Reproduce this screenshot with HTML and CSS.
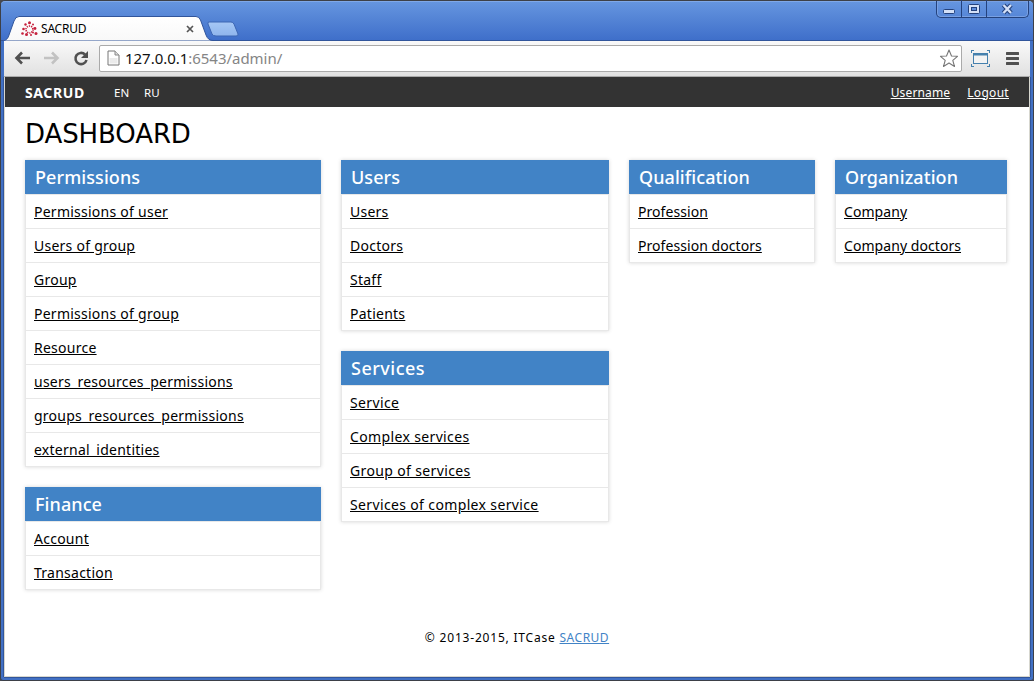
FILE: index.html
```html
<!DOCTYPE html>
<html lang="en">
<head>
<meta charset="utf-8">
<title>SACRUD</title>
<link rel="stylesheet" href="styles.css">
</head>
<body>
<div class="window">
  <header class="titlebar">
    <svg class="tab-shape" width="250" height="41" viewBox="0 0 250 41">
      <defs>
        <linearGradient id="tabFill" x1="0" y1="0" x2="0" y2="1"><stop offset="0" stop-color="#fff"/><stop offset="1" stop-color="#f8f8f8"/></linearGradient>
        <linearGradient id="newFill" x1="0" y1="0" x2="0" y2="1"><stop offset="0" stop-color="#a5c7f5"/><stop offset="1" stop-color="#8fb5ec"/></linearGradient>
      </defs>
      <path d="M3 41C7 40 8 38 9 35L14 21Q15.500 16.500 19 16.500H196Q199 16.500 200.500 20L206 35Q208 40.500 213 40.500V41Z" fill="url(#tabFill)" stroke="#31559b"/>
      <path d="M209 22H231Q233 22 234 24L238 34Q238.500 36 236 36H216Q213 36 212 34L208 24Q207.500 22 209 22Z" fill="url(#newFill)" stroke="#3c66b3"/>
    </svg>
    <div class="tab">
      <svg class="favicon" width="17" height="16" viewBox="0 0 17 16">
        <g fill="#c5203c"><circle cx="8.500" cy="1.700" r="1.500"/><circle cx="4.500" cy="3.500" r="1.200"/><circle cx="12" cy="3.500" r="1"/><circle cx="2.500" cy="8" r="1.300"/><circle cx="14" cy="7.500" r="1.400"/><circle cx="1.500" cy="12.500" r="1.300"/><circle cx="5.500" cy="13.500" r="1.500"/><circle cx="10" cy="14" r="1"/><circle cx="15" cy="12.500" r="1.500"/><circle cx="12" cy="11.500" r="1"/></g>
        <circle cx="8.500" cy="8.500" r="3.500" fill="none" stroke="#c5203c" stroke-width="1.700" stroke-dasharray="1.200 1"/>
      </svg>
      <span class="tab-title">SACRUD</span>
      <svg class="tab-close" width="8" height="8" viewBox="0 0 8 8"><path d="M1 1L7 7M7 1L1 7" stroke="#555" stroke-width="1.700"/></svg>
    </div>
    <div class="controls">
      <span class="control"><svg width="24" height="16"><rect x="6.500" y="9.500" width="11" height="4" rx="1" fill="#d3e0f7" stroke="#24427d"/></svg></span>
      <span class="control"><svg width="24" height="16"><rect x="6.500" y="4.500" width="11" height="9" rx="1" fill="#d3e0f7" stroke="#24427d"/><rect x="9.500" y="7.500" width="5" height="3" fill="#5d8bd9" stroke="#24427d"/></svg></span>
      <span class="control control-close"><svg width="41" height="16"><path d="M16.500 5L24 13M24 5L16.500 13" stroke="#24427d" stroke-width="4.500"/><path d="M16.500 5L24 13M24 5L16.500 13" stroke="#d3e0f7" stroke-width="2.400"/></svg></span>
    </div>
  </header>
  <div class="toolbar">
    <svg class="nav" width="86" height="20" viewBox="0 0 86 20">
      <path d="M19 10H5M11 4.500L5.500 10L11 15.500" fill="none" stroke="#505050" stroke-width="2.600"/>
      <path d="M33 10H47M41 4.500L46.500 10L41 15.500" fill="none" stroke="#c2c2c2" stroke-width="2.600"/>
      <path d="M74 6.500A5.600 5.600 0 1 0 75.500 12" fill="none" stroke="#505050" stroke-width="2.600"/>
      <path d="M77 3V10H70Z" fill="#505050"/>
    </svg>
    <div class="address">
      <svg class="file" width="13" height="16" viewBox="0 0 13 16"><path d="M1 1H8L12 5V15H1Z" fill="#fff" stroke="#777"/><path d="M8 1V5H12" fill="#ddd" stroke="#888"/><path d="M2.500 8H10.500V13.500H2.500Z" fill="#ebebeb"/></svg>
      <span class="url"><b>127.0.0.1</b>:6543/admin/</span>
      <svg class="star" width="20" height="19" viewBox="0 0 20 19"><path d="M10 1L12.500 7L18.500 7.300L13.800 11.300L15.500 17.500L10 14L4.500 17.500L6.200 11.300L1.500 7.300L7.500 7Z" fill="#fff" stroke="#777" stroke-width="1.100" stroke-linejoin="round"/></svg>
    </div>
    <svg class="capture" width="19" height="17" viewBox="0 0 19 17"><path d="M0 .5H3M.5 0V3M16 .5H19M18.500 0V3M0 16.500H3M.5 17V14M16 16.500H19M18.500 17V14" stroke="#4580ad"/><rect x="2.500" y="3.500" width="14" height="10" fill="#f3f3f3" stroke="#4580ad"/><path d="M2 4.500H17" stroke="#4580ad" stroke-width="2"/></svg>
    <svg class="menu" width="13" height="13" viewBox="0 0 13 13"><path d="M1 1.500H12M1 6.500H12M1 11.500H12" stroke="#505050" stroke-width="3" stroke-linecap="round"/></svg>
  </div>
  <div class="page">
    <nav class="navbar">
      <strong class="brand">SACRUD</strong><span class="lang">EN</span><span class="lang">RU</span>
      <a class="user">Username</a><a class="logout">Logout</a>
    </nav>
    <h1>DASHBOARD</h1>
    <main class="columns">
      <div class="column column-wide">
        <section class="card"><h2>Permissions</h2><ul><li><a>Permissions of user</a></li><li><a>Users of group</a></li><li><a>Group</a></li><li><a>Permissions of group</a></li><li><a>Resource</a></li><li><a>users_resources_permissions</a></li><li><a>groups_resources_permissions</a></li><li><a>external_identities</a></li></ul></section>
        <section class="card"><h2>Finance</h2><ul><li><a>Account</a></li><li><a>Transaction</a></li></ul></section>
      </div>
      <div class="column column-wide">
        <section class="card"><h2>Users</h2><ul><li><a>Users</a></li><li><a>Doctors</a></li><li><a>Staff</a></li><li><a>Patients</a></li></ul></section>
        <section class="card services"><h2>Services</h2><ul><li><a>Service</a></li><li><a>Complex services</a></li><li><a>Group of services</a></li><li><a>Services of complex service</a></li></ul></section>
      </div>
      <div class="column">
        <section class="card"><h2>Qualification</h2><ul><li><a>Profession</a></li><li><a>Profession doctors</a></li></ul></section>
      </div>
      <div class="column">
        <section class="card"><h2>Organization</h2><ul><li><a>Company</a></li><li><a>Company doctors</a></li></ul></section>
      </div>
    </main>
    <footer>© 2013-2015, ITCase <a>SACRUD</a></footer>
  </div>
</div>
</body>
</html>
```
FILE: styles.css
```css
* { box-sizing: border-box; }
body { margin: 0; background: #4a4a4f; font-family: "Noto Sans", "DejaVu Sans", sans-serif; color: #000; overflow: hidden; }
svg { display: block; flex: none; }
.window { width: 1034px; height: 681px; border: 1px solid #3d4047; border-radius: 5px 5px 3px 3px; background: #4170c4; padding: 0 3px 3px; display: flex; flex-direction: column; }
.titlebar { position: relative; flex: none; height: 40px; margin: 0 -3px; display: flex; border-top: 1px solid #7fa8e8; border-bottom: 1px solid #31559b; background: linear-gradient(#6595df, #3f6fca); border-radius: 4px 4px 0 0; }
.tab-shape { position: absolute; left: -1px; top: -2px; }
.tab { position: relative; width: 194px; height: 24px; margin: 15px 0 0 20px; display: flex; align-items: center; }
.tab-title { margin-left: 3px; font-size: 12px; line-height: 20px; letter-spacing: -.2px; flex: 1; }
.tab-close { margin-right: 21px; }
.controls { display: flex; height: 17px; margin: -1px 4px 0 auto; border: 1px solid #24427d; border-top: 0; border-radius: 0 0 5px 5px; box-shadow: inset 0 0 0 1px #79a0e2; }
.control { margin-top: -1px; }
.control + .control { border-left: 1px solid #24427d; }
.toolbar { flex: none; height: 36px; display: flex; align-items: center; background: linear-gradient(#f9f9f9, #e1e1e1); border-bottom: 1px solid #aaa; }
.nav { margin: -1px 0 0 7px; }
.address { height: 27px; width: 863px; margin-left: 2px; padding: 0 2px 0 7px; border: 1px solid #aaa; border-radius: 2px; background: #fff; display: flex; align-items: center; }
.file { margin-top: -1px; }
.url { margin: -2px 0 0 5px; flex: 1; color: #858585; font-size: 15px; line-height: 22px; letter-spacing: -.03px; }
.url b { color: #111; font-weight: 400; }
.capture { margin-left: 9px; }
.menu { margin-left: 16px; }
.page { flex: 1; min-height: 0; border: 1px solid #d7d7cf; border-width: 0 1px 1px; box-shadow: 0 1px 0 #31559b, 1px 0 0 #31559b, -1px 0 0 #31559b; background: #fff; }
.navbar { height: 30px; padding: 0 20px; background: #333; color: #fff; display: flex; align-items: center; font-size: 12px; letter-spacing: .15px; }
.brand { width: 89px; font-size: 14px; letter-spacing: .6px; }
.lang { width: 30px; font-size: 11.500px; letter-spacing: 0; }
.navbar a { text-decoration: underline; }
.user { margin-left: auto; }
.logout { margin-left: 17px; letter-spacing: .3px; }
h1 { margin: 0; padding: 9px 0 0 20px; height: 53px; font: 400 26px/36px "DejaVu Sans", sans-serif; letter-spacing: -.1px; }
.columns { display: grid; grid-template-columns: 296px 268px 186px 172px; gap: 20px; padding-left: 20px; height: 469px; align-items: start; }
.column { display: flex; flex-direction: column; gap: 20px; }
.card { box-shadow: 0 0 4px rgba(0, 0, 0, .16); }
h2 { margin: 0; height: 34px; padding-left: 10px; background: #4183c6; color: #fff; font: 500 18px/35px "Noto Sans", sans-serif; letter-spacing: .08px; }
.services h2 { letter-spacing: .5px; }
ul { list-style: none; margin: 0; padding: 0; border: 1px solid #e8e8e8; border-bottom: 0; }
li { height: 34px; padding-left: 8px; border-bottom: 1px solid #e8e8e8; font-size: 14px; line-height: 34px; letter-spacing: .06px; }
.column-wide li { letter-spacing: .25px; }
.column-wide .services li { letter-spacing: .36px; }
li a, footer a { text-decoration: underline; }
footer { text-align: center; padding-right: 0; font-size: 12px; line-height: 18px; letter-spacing: .8px; }
footer a { color: #4183c6; letter-spacing: .5px; }
```
